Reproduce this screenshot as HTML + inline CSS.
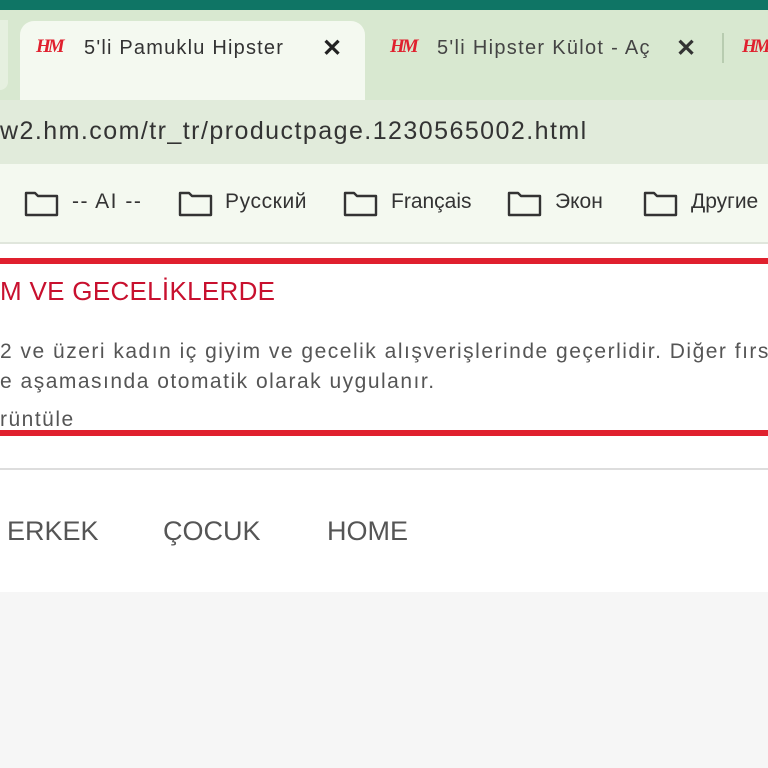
<!DOCTYPE html>
<html><head><meta charset="utf-8"><style>
*{margin:0;padding:0;box-sizing:border-box}
body{width:768px;height:768px;overflow:hidden;background:#fff;font-family:"Liberation Sans",sans-serif;position:relative}
.a{position:absolute;white-space:nowrap}
</style></head><body>
<div class="a" style="left:0;top:0;width:768px;height:10px;background:#0f7565"></div>
<div class="a" style="left:0;top:10px;width:768px;height:90px;background:#d8e8d0"></div>
<div class="a" style="left:0;top:20px;width:8px;height:70px;background:#e6f0e0;border-radius:0 0 10px 0"></div>
<div class="a" style="left:20px;top:21px;width:345px;height:80px;background:#f4f9f0;border-radius:14px 14px 0 0"></div>
<div class="a" style="left:36px;top:36px;font:italic bold 19px 'Liberation Serif',serif;color:#e0202e;letter-spacing:-3px">HM</div>
<div class="a" style="left:84px;top:37px;font-size:20px;color:#333;letter-spacing:1.2px">5'li Pamuklu Hipster</div>
<div class="a" style="left:322px;top:34px;font-size:24px;color:#222;font-weight:bold">✕</div>
<div class="a" style="left:390px;top:36px;font:italic bold 19px 'Liberation Serif',serif;color:#e0202e;letter-spacing:-3px">HM</div>
<div class="a" style="left:437px;top:37px;font-size:20px;color:#444;letter-spacing:1.3px">5'li Hipster Külot - Aç</div>
<div class="a" style="left:676px;top:34px;font-size:24px;color:#333;font-weight:bold">✕</div>
<div class="a" style="left:722px;top:33px;width:2px;height:30px;background:#b8ccb0"></div>
<div class="a" style="left:742px;top:36px;font:italic bold 19px 'Liberation Serif',serif;color:#e0202e;letter-spacing:-3px">HM</div>
<div class="a" style="left:0;top:100px;width:768px;height:64px;background:#e1ebdb"></div>
<div class="a" style="left:0;top:117px;font-size:25px;color:#333;letter-spacing:1.45px">w2.hm.com/tr_tr/productpage.1230565002.html</div>
<div class="a" style="left:0;top:164px;width:768px;height:79px;background:#f4f9f0"></div>
<div class="a" style="left:0;top:242px;width:768px;height:2px;background:#e0e6dc"></div>
<svg class="a" style="left:0;top:188px" width="768" height="30">
<g fill="none" stroke="#333" stroke-width="2.4" stroke-linejoin="round">
<path d="M26 5h9l3 3h19v19h-31z"/><path d="M180 5h9l3 3h19v19h-31z"/><path d="M345 5h9l3 3h19v19h-31z"/><path d="M509 5h9l3 3h19v19h-31z"/><path d="M645 5h9l3 3h19v19h-31z"/>
</g></svg>
<div class="a" style="left:72px;top:190px;font-size:21px;color:#333;letter-spacing:1.5px">-- AI --</div>
<div class="a" style="left:225px;top:190px;font-size:21px;color:#333;letter-spacing:0.6px">Русский</div>
<div class="a" style="left:391px;top:190px;font-size:21px;color:#333">Français</div>
<div class="a" style="left:555px;top:190px;font-size:21px;color:#333">Экон</div>
<div class="a" style="left:691px;top:190px;font-size:21px;color:#333">Другие</div>
<div class="a" style="left:0;top:258px;width:768px;height:6px;background:#e0202e"></div>
<div class="a" style="left:0;top:430px;width:768px;height:6px;background:#e0202e"></div>
<div class="a" style="left:0;top:276px;font-size:26px;color:#c8102e;letter-spacing:0.3px">M VE GECELİKLERDE</div>
<div class="a" style="left:0;top:340px;font-size:21px;color:#555;letter-spacing:1.5px">2 ve üzeri kadın iç giyim ve gecelik alışverişlerinde geçerlidir. Diğer fırs</div>
<div class="a" style="left:0;top:370px;font-size:21px;color:#555;letter-spacing:1.5px">e aşamasında otomatik olarak uygulanır.</div>
<div class="a" style="left:0;top:408px;font-size:21px;color:#555;letter-spacing:1.5px">rüntüle</div>
<div class="a" style="left:0;top:468px;width:768px;height:2px;background:#ddd"></div>
<div class="a" style="left:7px;top:516px;font-size:27px;color:#555">ERKEK</div>
<div class="a" style="left:163px;top:516px;font-size:27px;color:#555">ÇOCUK</div>
<div class="a" style="left:327px;top:516px;font-size:27px;color:#555">HOME</div>
<div class="a" style="left:0;top:592px;width:768px;height:176px;background:#f6f6f6"></div>
</body></html>
